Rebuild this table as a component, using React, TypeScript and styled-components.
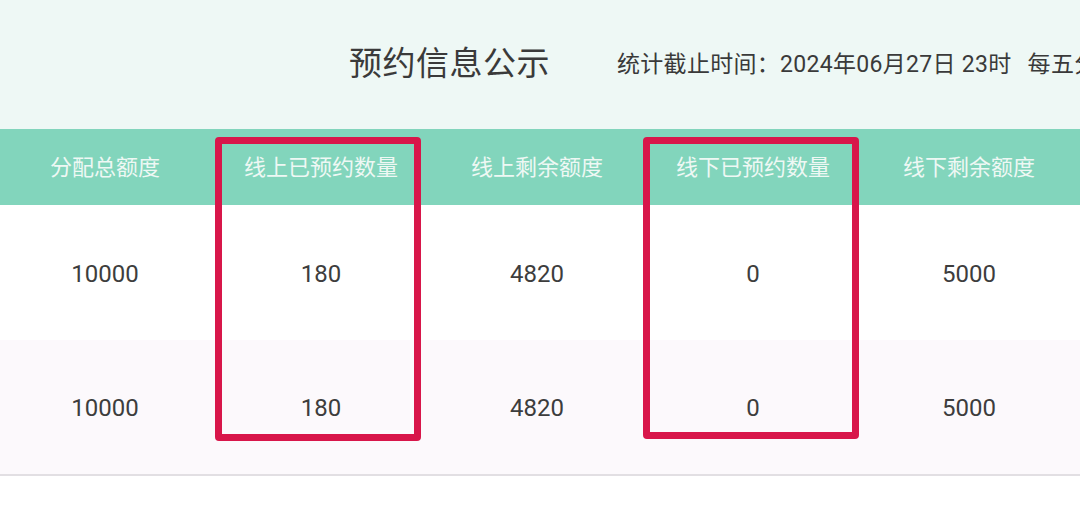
import React from "react";
import styled, { createGlobalStyle } from "styled-components";

const Global = createGlobalStyle`
  html, body { margin: 0; padding: 0; background: #ffffff; }
  body { font-family: Roboto, "Noto Sans CJK SC", sans-serif; overflow: hidden; }
`;

const Page = styled.div`
  position: relative;
  width: 1080px;
  height: 509px;
  overflow: hidden;
  background: #ffffff;
`;

const Header = styled.div`
  height: 129px;
  background: #eef8f5;
  display: flex;
  align-items: center;
  padding-left: 349px;
  white-space: nowrap;
  box-sizing: border-box;
  padding-bottom: 8px;
`;

const Title = styled.h1`
  margin: 0;
  font-family: "Noto Sans CJK SC", sans-serif;
  font-size: 33px;
  font-weight: 400;
  color: #3a3a3a;
  letter-spacing: 0.5px;
`;

const Subtitle = styled.span`
  margin-left: 67px;
  font-family: Roboto, "Noto Sans CJK SC", sans-serif;
  font-size: 23px;
  letter-spacing: 0.3px;
  color: #3a3a3a;
  padding-top: 2px;
`;

const Note = styled.span`
  margin-left: 16px;
`;

const Table = styled.div`
  display: grid;
  grid-template-columns: repeat(5, 216px) 1fr;
  margin-left: -3px;
  width: 1083px;
`;

const HeadCell = styled.div`
  height: 76px;
  background: #82d5bc;
  color: #eef8f4;
  font-family: "Noto Sans CJK SC", sans-serif;
  font-size: 22px;
  display: flex;
  align-items: center;
  justify-content: center;
  padding-bottom: 5px;
  box-sizing: border-box;
`;

const Cell = styled.div<{ $alt?: boolean; $last?: boolean }>`
  height: ${(p) => (p.$last ? "136px" : "135px")};
  background: ${(p) => (p.$alt ? "#fcf9fc" : "#ffffff")};
  border-bottom: ${(p) => (p.$last ? "2px solid #e2dfe3" : "none")};
  box-sizing: border-box;
  display: flex;
  align-items: center;
  justify-content: center;
  font-family: Roboto, "Noto Sans CJK SC", sans-serif;
  font-size: 24px;
  color: #3d3d3d;
  padding-top: ${(p) => (p.$last ? "1px" : "2px")};
`;

const Highlight = styled.div<{ $left: number; $top: number; $w: number; $h: number }>`
  position: absolute;
  left: ${(p) => p.$left}px;
  top: ${(p) => p.$top}px;
  width: ${(p) => p.$w}px;
  height: ${(p) => p.$h}px;
  border: 7px solid #d8164a;
  border-radius: 4px;
  box-sizing: border-box;
  pointer-events: none;
`;

const heads = ["分配总额度", "线上已预约数量", "线上剩余额度", "线下已预约数量", "线下剩余额度", ""];
const rows = [
  ["10000", "180", "4820", "0", "5000", ""],
  ["10000", "180", "4820", "0", "5000", ""],
];

export default function App() {
  return (
    <Page>
      <Global />
      <Header>
        <Title>预约信息公示</Title>
        <Subtitle>
          统计截止时间：2024年06月27日 23时<Note>每五分钟更新</Note>
        </Subtitle>
      </Header>
      <Table>
        {heads.map((h, j) => (
          <HeadCell key={`h-${j}`}>{h}</HeadCell>
        ))}
        {rows.map((r, i) =>
          r.map((v, j) => (
            <Cell key={`${i}-${j}`} $alt={i === 1} $last={i === rows.length - 1}>
              {v}
            </Cell>
          ))
        )}
      </Table>
      <Highlight $left={215} $top={137} $w={206} $h={304} />
      <Highlight $left={643} $top={137} $w={216} $h={302} />
    </Page>
  );
}
